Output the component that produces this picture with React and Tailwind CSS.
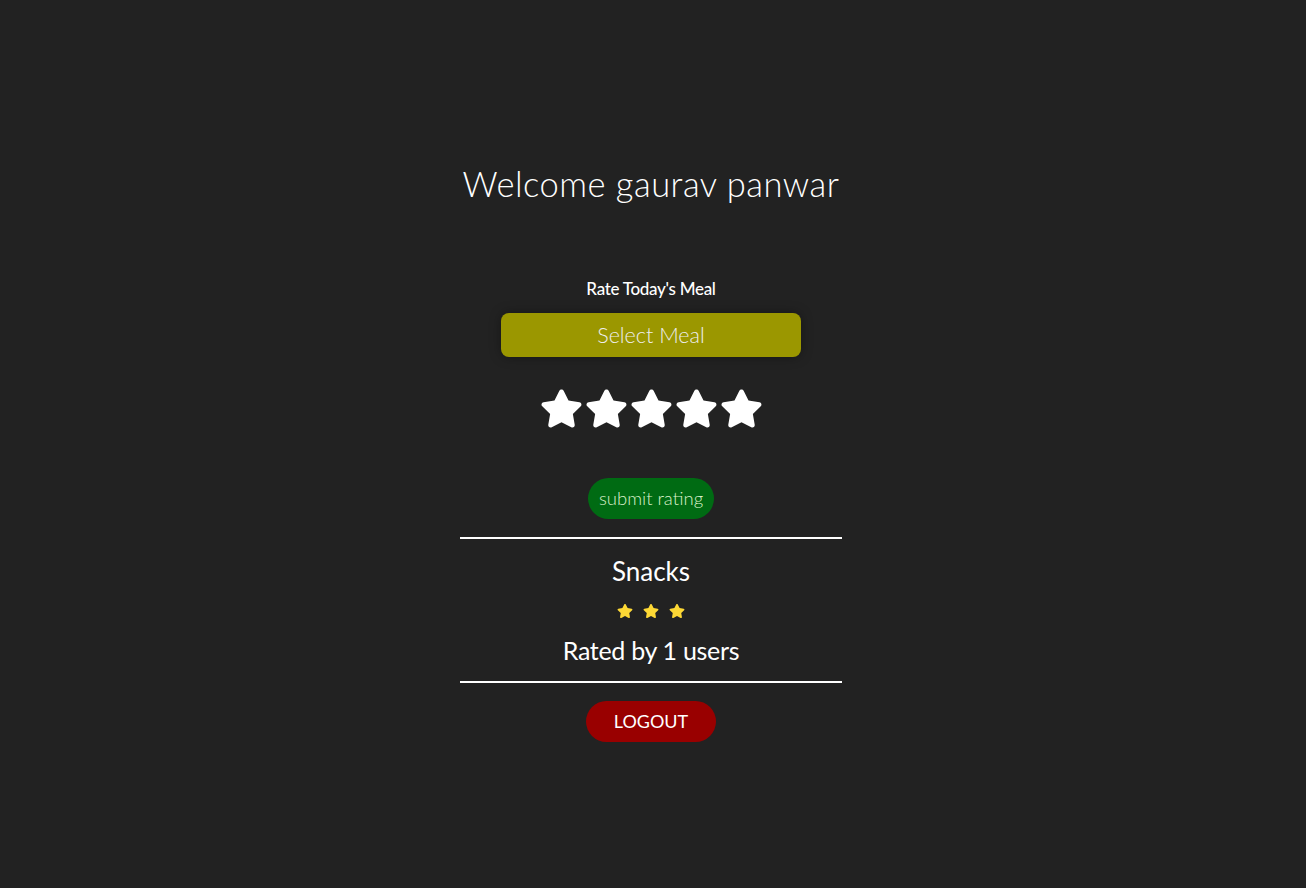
import { FaStar } from 'react-icons/fa';

export default function App() {
  return (
    <div className="min-h-[888px] w-full bg-[#222222] pr-[4px] text-white" style={{ fontFamily: 'Lato, "Open Sans", sans-serif' }}>
      <div className="mx-auto flex w-[382px] flex-col items-center pt-[160px]">
        <h1 className="whitespace-nowrap text-center text-[34.5px] font-light leading-[48px] tracking-[0.5px]">Welcome gaurav panwar</h1>

        <p className="mt-[69px] text-[17px] font-medium leading-[24px] tracking-[-0.3px]">Rate Today's Meal</p>

        <button className="mt-[12px] h-[44px] w-[300px] rounded-[8px] bg-[#9b9700] text-[21.5px] font-light text-[#eeeeee] shadow-[0_0_12px_rgba(0,0,0,0.35)]">
          Select Meal
        </button>

        <div className="mt-[30px] flex gap-[2px]">
          {[0, 1, 2, 3, 4].map(i => (
            <FaStar key={i} className="h-[43px] w-[43px] text-white" />
          ))}
        </div>

        <button className="mt-[48px] h-[41px] w-[126px] rounded-full bg-[#006b13] text-[18.5px] font-light text-[#d8f0c8]">
          submit rating
        </button>

        <div className="mt-[18px] h-[2px] w-full bg-white" />

        <h2 className="mt-[16px] text-[26px] leading-[32px]">Snacks</h2>
        <div className="mt-[16px] flex gap-[10px]">
          {[0, 1, 2].map(i => (
            <FaStar key={i} className="h-[16px] w-[16px] text-[#fdd835]" />
          ))}
        </div>
        <p className="mt-[15px] text-[25px] leading-[32px] tracking-[-0.3px]">Rated by 1 users</p>

        <div className="mt-[15px] h-[2px] w-full bg-white" />

        <button className="mt-[18px] h-[41px] w-[130px] rounded-full bg-[#990000] text-[18px] text-white">
          LOGOUT
        </button>
      </div>
    </div>
  );
}
